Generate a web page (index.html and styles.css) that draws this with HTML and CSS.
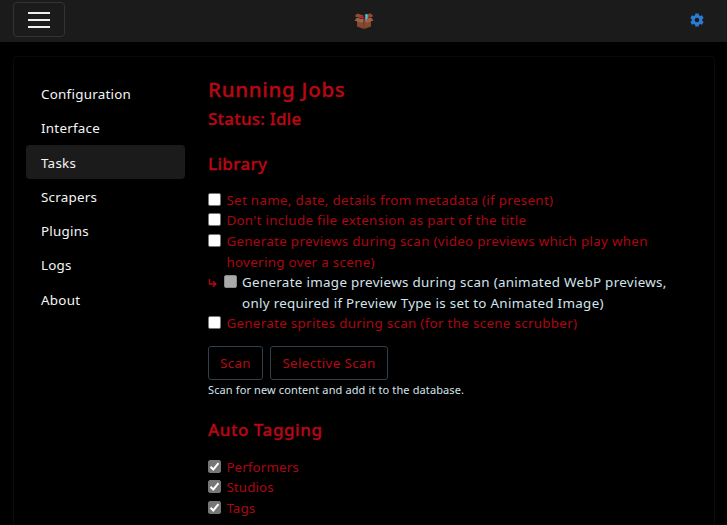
FILE: index.html
```html
<!DOCTYPE html>
<html lang="en">
<head>
<meta charset="utf-8">
<title>Tasks</title>
<link rel="stylesheet" href="styles.css">
</head>
<body>
<header class="navbar">
  <button class="toggle" aria-label="Menu"><span></span><span></span><span></span></button>
  <svg class="logo" viewBox="0 0 20 18" aria-hidden="true">
    <path d="M3 6 10 7.5 17 6V14.5L10 17 3 14.5Z" fill="#85492f"/>
    <path d="M3 5.5 10 3 17 5.5 10 8Z" fill="#421b1b"/>
    <path d="M3.2 1.6 9.5 3.5 7.4 6.2 0.6 4.3ZM16.4 1.2 19.6 4.3 13.5 6 10.5 3.4Z" fill="#8d4e35"/>
    <path d="M2.7 5.7 9.8 7.6 7.8 11 0.5 8.6ZM17 5.5 19.5 8.5 12.2 11 10.2 7.6Z" fill="#a15f40"/>
    <path d="M6 4.2 8 3.5 10.5 5.6 8.5 7.2Z" fill="#b91f29"/>
    <path d="M14 4 15.5 5 14 6.8Z" fill="#bd2933"/>
    <path d="M11.4 1.7 13.8 2.4 13.5 7 11.2 7.6Z" fill="#42c5df"/>
    <path d="M6.3 8.4 8.7 6.7 9.6 9 7.4 10.4Z" fill="#77777a"/>
    <path d="M9.8 8V16.8" stroke="#65351f" stroke-width=".7"/>
  </svg>
  <svg class="gear" viewBox="0 0 14 14" aria-hidden="true">
    <path fill="#2b7bd2" fill-rule="evenodd" d="M5.4.4h3.2l.4 1.9 1.1.6 1.9-.6 1.6 2.8-1.5 1.3v1.2l1.5 1.3-1.6 2.8-1.9-.6-1.1.6-.4 1.9H5.4L5 11.7l-1.1-.6-1.9.6L.4 8.9l1.5-1.3V6.4L.4 5.1 2 2.3l1.9.6L5 2.3ZM7 4.7A2.3 2.3 0 1 0 7 9.3 2.3 2.3 0 0 0 7 4.7Z"/>
  </svg>
</header>
<main class="card">
  <nav class="side">
    <a>Configuration</a>
    <a>Interface</a>
    <a class="active">Tasks</a>
    <a>Scrapers</a>
    <a>Plugins</a>
    <a>Logs</a>
    <a>About</a>
  </nav>
  <section class="content">
    <h4>Running Jobs</h4>
    <h5 class="status">Status: Idle</h5>
    <h5 class="library">Library</h5>
    <div class="row"><i class="box"></i><p>Set name, date, details from metadata (if present)</p></div>
    <div class="row"><i class="box"></i><p>Don't include file extension as part of the title</p></div>
    <div class="row"><i class="box"></i><p>Generate previews during scan (video previews which play when<br>hovering over a scene)</p></div>
    <div class="row sub"><svg class="arrow" viewBox="0 0 10 10"><path d="M1.5 1V6H7.5M5 3.2 7.8 6 5 8.8"/></svg><i class="box disabled"></i><p>Generate image previews during scan (animated WebP previews,<br>only required if Preview Type is set to Animated Image)</p></div>
    <div class="row"><i class="box"></i><p>Generate sprites during scan (for the scene scrubber)</p></div>
    <div class="buttons"><button class="btn scan">Scan</button><button class="btn selective">Selective Scan</button></div>
    <small>Scan for new content and add it to the database.</small>
    <h5 class="tagging">Auto Tagging</h5>
    <div class="row tag"><i class="box checked"><svg viewBox="0 0 13 13"><path d="m2.5 6.7 2.8 2.8 5.2-6.3"/></svg></i><p>Performers</p></div>
    <div class="row tag"><i class="box checked"><svg viewBox="0 0 13 13"><path d="m2.5 6.7 2.8 2.8 5.2-6.3"/></svg></i><p>Studios</p></div>
    <div class="row tag"><i class="box checked"><svg viewBox="0 0 13 13"><path d="m2.5 6.7 2.8 2.8 5.2-6.3"/></svg></i><p>Tags</p></div>
  </section>
</main>
</body>
</html>
```
FILE: styles.css
```css
* { box-sizing: border-box; }
html { background: #000; }
body {
  margin: 0;
  background: #000;
  color: #d5e3ec;
  font: 13.4px/20.6px "Noto Sans", "Open Sans", sans-serif;
}
h4, h5, p { margin: 0; }

.navbar {
  height: 42px;
  padding: 2px 23px 0 13px;
  background: #1b1b1b;
  display: grid;
  grid-template-columns: 1fr 20px 1fr;
  align-items: start;
}
.toggle {
  width: 52px;
  height: 35px;
  padding: 0;
  border: 1px solid #333;
  border-radius: 4px;
  background: transparent;
  display: flex;
  flex-direction: column;
  align-items: center;
  justify-content: center;
  gap: 5px;
}
.toggle span { width: 22px; height: 2px; background: #eee; }
.logo { width: 20px; height: 18px; margin: 10px 0 0 5px; }
.gear { width: 14px; height: 14px; margin-top: 11px; justify-self: end; }

.card {
  height: 469px;
  margin: 14px 12px 0 13px;
  border: 1px solid #0b0b0b;
  border-bottom: 0;
  border-radius: 4px 4px 0 0;
  padding: 20px 0 0 12px;
  display: flex;
}
.side { width: 159px; margin-right: 23px; flex: none; letter-spacing: .25px; }
.side a {
  display: block;
  height: 34.3px;
  padding-left: 15px;
  border-radius: 4px;
  color: #f5f5f5;
  line-height: 34.3px;
}
.side .active {
  background: linear-gradient(#1b1b1b, #1b1b1b);
  height: 34.3px;
  margin-top: -.7px;
  padding-top: .7px;
  margin-bottom: .7px;
}

.content { flex: 1; color: #ac0612; white-space: nowrap; }
h4, h5 { font-weight: 500; color: #b60814; -webkit-text-stroke: .35px #b60814; }
h4 { height: 25px; font-size: 20.5px; line-height: 25px; letter-spacing: .7px; }
h5 { height: 21px; font-size: 17px; line-height: 21px; letter-spacing: .35px; }
.status { margin-top: 6px; letter-spacing: .2px; }
.library { margin: 23.5px 0 16.4px; }
.row { display: flex; letter-spacing: .3px; }
.row p { margin-left: 5px; }
.box {
  flex: none;
  width: 13px;
  height: 13px;
  margin: 3px 0 0 .4px;
  border: 1px solid #777;
  border-radius: 2px;
  background: #fff;
}
.sub { color: #d5e3ec; }
.arrow { flex: none; width: 10px; height: 10px; margin: 6px 5px 0 0; }
.arrow path { fill: none; stroke: #b60814; stroke-width: 1.4; }
.disabled { background: #aaa; border-color: #888; margin-left: .6px; }
.row.sub p { margin-left: 5.4px; }
.checked { background: #767676; border-color: #767676; }
.checked svg { display: block; width: 13px; height: 13px; margin: -1px; }
.checked path { fill: none; stroke: #fff; stroke-width: 2; }
.tag { letter-spacing: .1px; }
.buttons { display: flex; gap: 7px; margin-top: 12.4px; }
.btn {
  height: 33.4px;
  padding: 0;
  border: 1px solid #2f3f4c;
  border-radius: 3px;
  background: transparent;
  color: #b60814;
  font: inherit;
  letter-spacing: .37px;
}
.scan { width: 55px; }
.selective { width: 118px; }
small { display: block; margin-top: 1.6px; height: 17px; line-height: 17px; font-size: 11px; letter-spacing: .12px; color: #d5e3ec; }
.tagging { margin: 20.3px 0 16.9px; letter-spacing: .55px; }
```
